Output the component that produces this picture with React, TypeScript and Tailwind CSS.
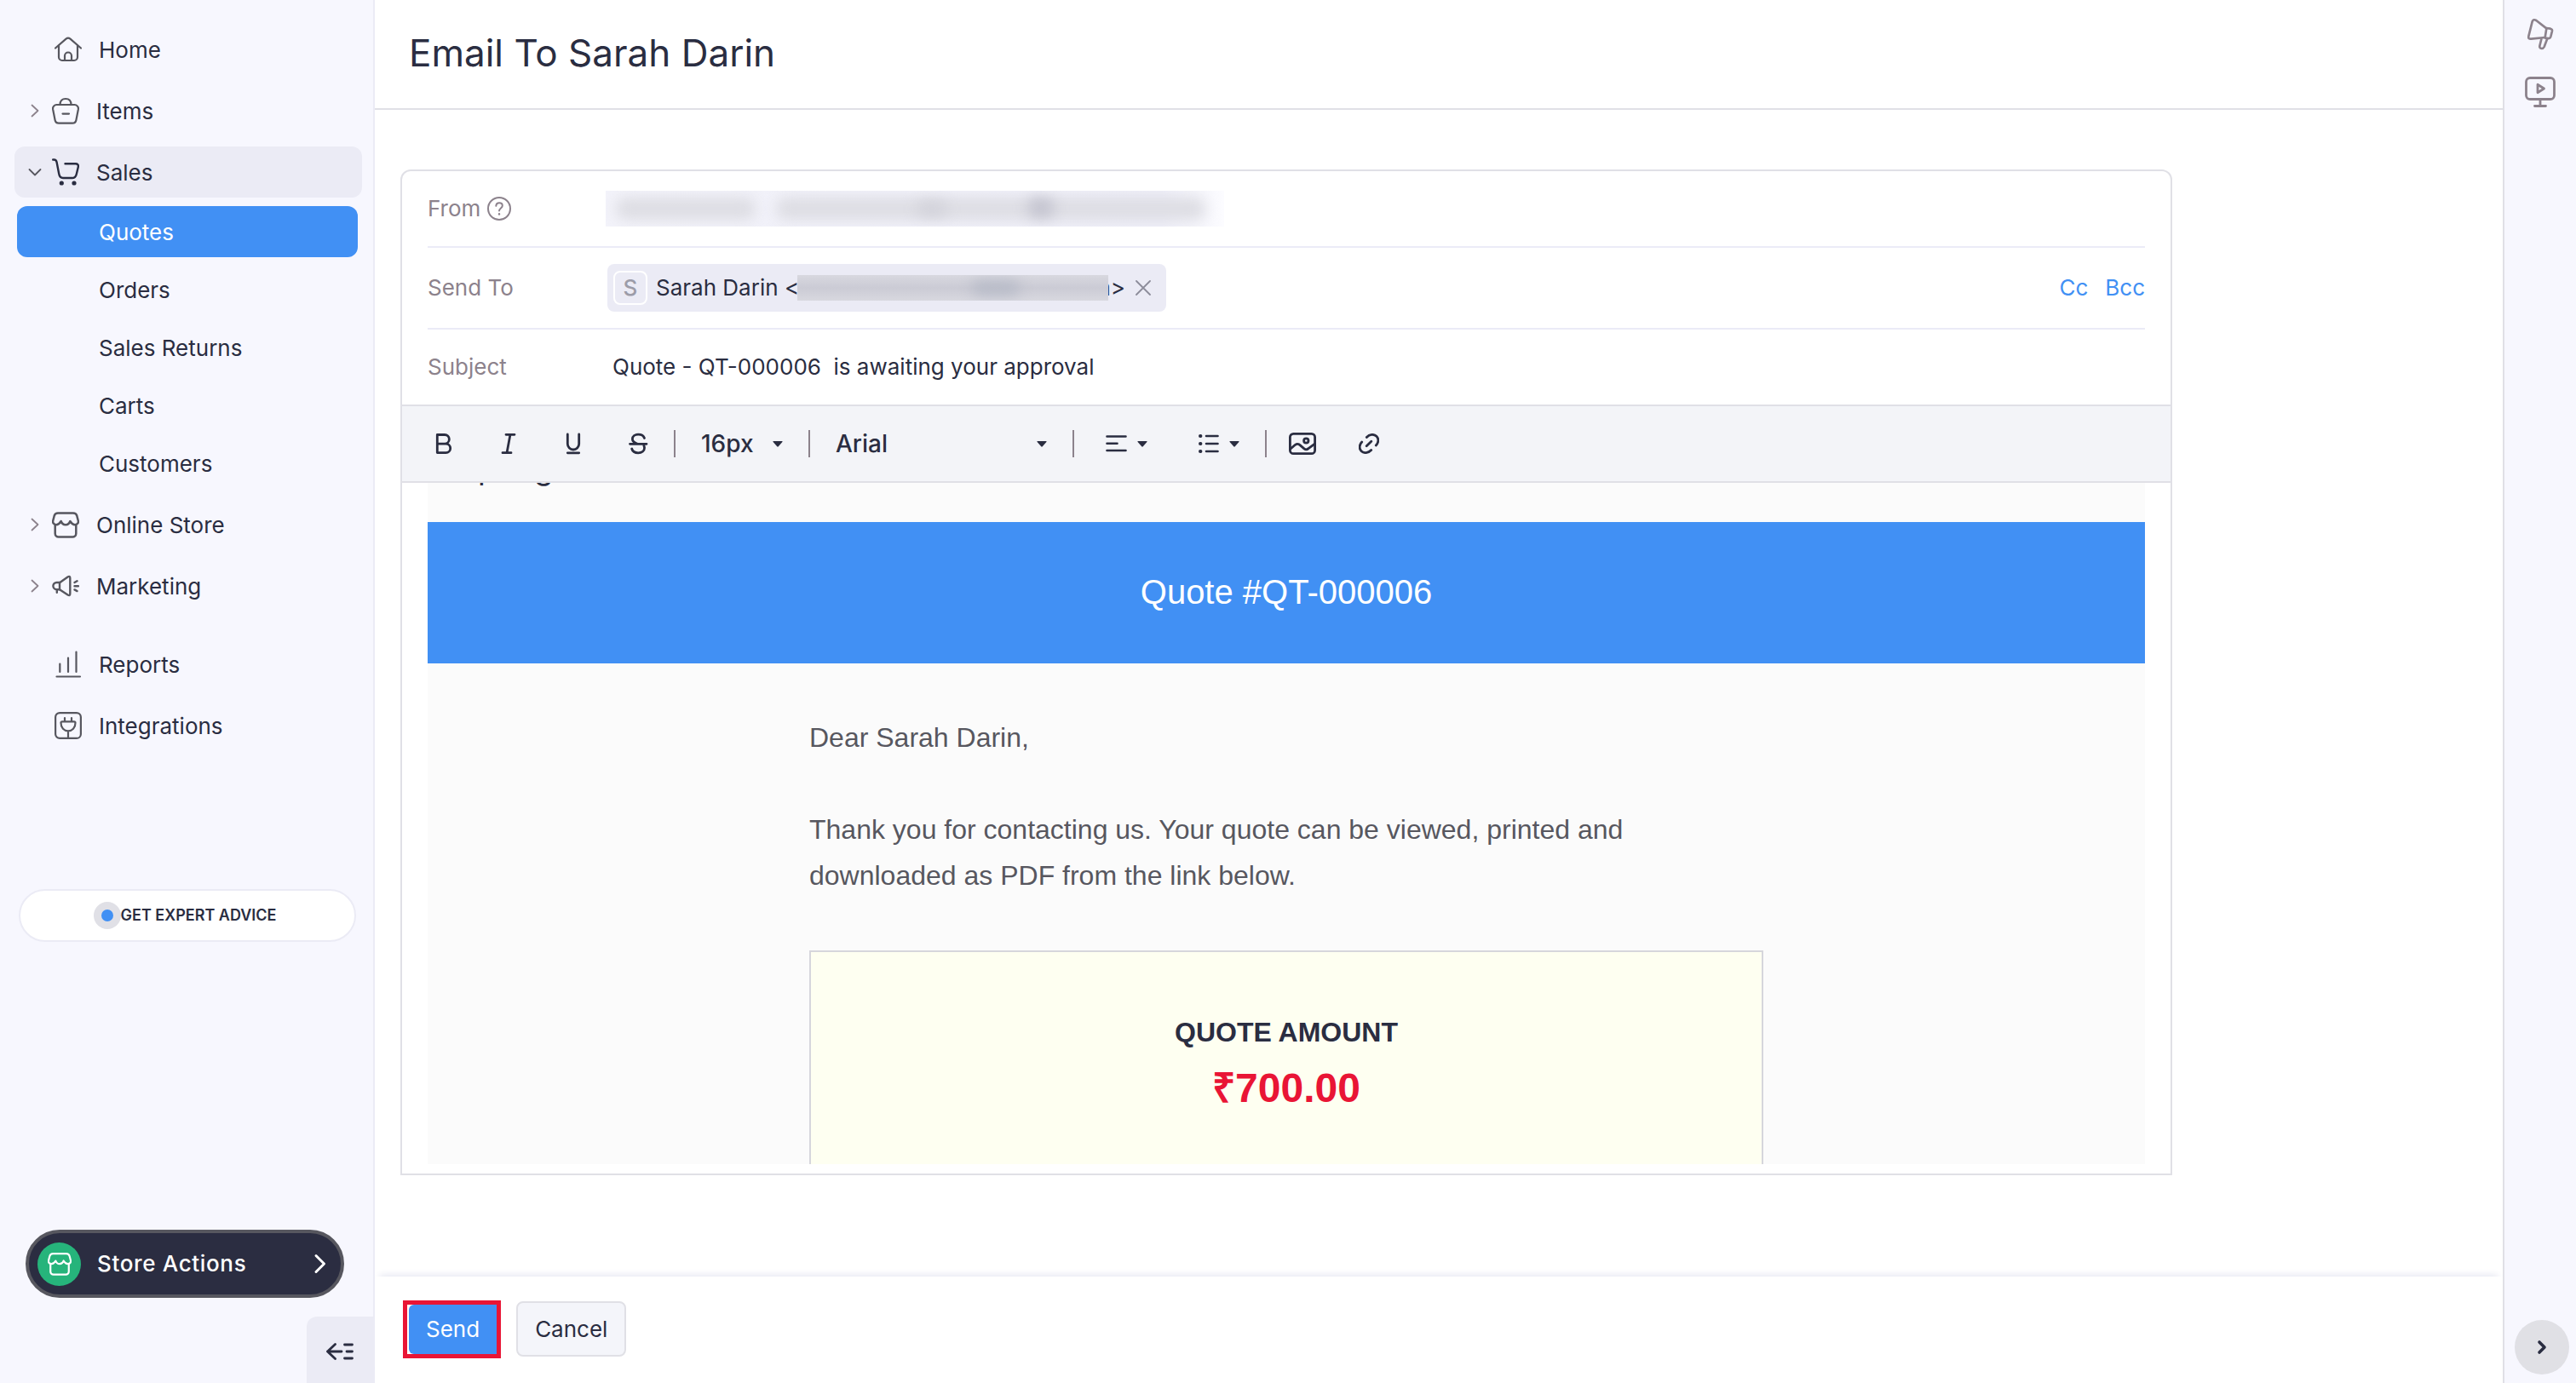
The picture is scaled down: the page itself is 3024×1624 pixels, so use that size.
import React from "react";

type IconProps = { className?: string };

const stroke = {
  fill: "none",
  stroke: "currentColor",
  strokeLinecap: "round" as const,
  strokeLinejoin: "round" as const,
};

const HomeIcon = () => (
  <svg viewBox="0 0 32 32" className="size-8" {...stroke} strokeWidth={2.2}>
    <path d="M1 14.5 13.5 3.6Q16 1.6 18.5 3.6L31 14.5" />
    <path d="M5 11.5V25a4 4 0 0 0 4 4h14a4 4 0 0 0 4-4V11.5" />
    <path d="M12 29v-5.5a4 4 0 0 1 8 0V29" />
  </svg>
);

const BagIcon = () => (
  <svg viewBox="0 0 32 32" className="size-8" {...stroke} strokeWidth={2.2}>
    <path d="M5.5 9h21a4.500 4.500 0 0 1 4.400 5.200L28.400 27a4.500 4.500 0 0 1-4.400 3.700H8A4.500 4.500 0 0 1 3.600 27L1.100 14.200A4.500 4.500 0 0 1 5.500 9Z" />
    <path d="M9.500 9C9.500 4.500 12 2 16 2s6.500 2.500 6.500 7M12.500 19.600h7.500" />
  </svg>
);

const CartIcon = () => (
  <svg viewBox="0 0 32 32" className="size-8" {...stroke} strokeWidth={2.4}>
    <path d="M1.200 1.500h1.300c2 0 2.700 1 3.100 3L8.200 18c.6 3.500 1.800 5 4.800 5h10.500c3 0 4.500-1.300 5.200-4.300l2-8.200c.7-3-.6-4.300-3.100-4.300H15.500" />
    <circle cx="11.300" cy="29" r="1.400" fill="currentColor" />
    <circle cx="26" cy="29" r="1.400" fill="currentColor" />
  </svg>
);

const StoreIcon = ({ className = "size-8" }: IconProps) => (
  <svg viewBox="0 0 32 32" className={className} {...stroke} strokeWidth={2.5}>
    <path d="M7 2.500h18a4.500 4.500 0 0 1 4.300 3.200l1.500 5.800c.6 2.600-1.200 4.700-3.800 4.700-2.300 0-3.700-.9-5.700-4.200-1.100 3.300-3.100 4.200-5.300 4.200s-4.200-.9-5.300-4.200C8.700 15.300 7.300 16.200 5 16.200c-2.600 0-4.400-2.100-3.800-4.700l1.500-5.800A4.500 4.500 0 0 1 7 2.500Z" />
    <path d="M3.700 16v10.500a4 4 0 0 0 4 4h16.600a4 4 0 0 0 4-4V16" />
  </svg>
);

const MegaphoneIcon = () => (
  <svg viewBox="0 0 32 32" className="size-8" {...stroke} strokeWidth={2.4}>
    <path d="M9 12.300 18.500 5.500Q21.300 3.800 21.300 7v18q0 3.200-2.800 1.500L9 20.200" />
    <path d="M9 12H5.500a4.100 4.100 0 0 0 0 8.200H9ZM5.800 20.500v3.300" />
    <path d="M26.500 16.200h4.500M26.500 12l3-1.700M26.500 20.400l3 1.700" />
  </svg>
);

const ReportsIcon = () => (
  <svg viewBox="0 0 32 32" className="size-8" {...stroke} strokeWidth={2.2}>
    <path d="M6.300 15.500V25M16 8.500V25M25.500 1.500V25M2.500 30.500H30" />
  </svg>
);

const PlugIcon = () => (
  <svg viewBox="0 0 32 32" className="size-8" {...stroke} strokeWidth={2.2}>
    <rect x="1.100" y="1.100" width="29.800" height="29.800" rx="5" />
    <path d="M12 7v4M20 7v4M9 11.300h14q1.500 0 1.500 1.500c0 6-3.700 9.600-8.500 9.600s-8.500-3.600-8.500-9.600q0-1.500 1.500-1.500ZM16 22.500V31" />
  </svg>
);

const Chevron = ({ open }: { open?: boolean }) => (
  <svg viewBox="0 0 16 16" className={open ? "size-4 text-[#57575f]" : "size-4 text-[#8c828c]"} {...stroke} strokeWidth={1.8}>
    {open ? <path d="m1.500 5 6.500 6.500L14.500 5" /> : <path d="m4.500 1.500 7 6.500-7 6.500" />}
  </svg>
);

const Caret = ({ className = "" }: IconProps) => (
  <svg viewBox="0 0 12 7" className={"h-[7px] w-3 " + className} fill="currentColor">
    <path d="M1 0h10q1 0 .4.900L6.800 6.300q-.8.700-1.600 0L.6.900Q0 0 1 0Z" />
  </svg>
);

const Divider = () => <span className="h-8 w-[2px] bg-[#8c828c]" />;

function PlainItem({ icon, label }: { icon: React.ReactNode; label: string }) {
  return (
    <a href="#" className="flex h-[60px] items-center gap-5 pl-[47px] text-[#57575f]">
      {icon}
      <span className="pt-[2px] text-[#2a2d41]">{label}</span>
    </a>
  );
}

function GroupItem({ icon, label, open }: { icon: React.ReactNode; label: string; open?: boolean }) {
  return (
    <button
      type="button"
      aria-expanded={!!open}
      className={
        open
          ? "flex h-[60px] w-full items-center rounded-xl bg-[#ebebf5] pl-4 text-[#2a2d41]"
          : "flex h-[60px] w-full items-center rounded-xl pl-4 text-[#57575f]"
      }
    >
      <Chevron open={open} />
      <span className="ml-3">{icon}</span>
      <span className="ml-5 pt-[2px] text-[#2a2d41]">{label}</span>
    </button>
  );
}

function Sidebar() {
  return (
    <aside className="flex w-[440px] shrink-0 flex-col border-r-2 border-[#ebebf5] bg-[#f7f7fe]">
      <nav className="flex flex-col gap-3 pt-7 pr-[13px] pl-[17px]">
        <PlainItem icon={<HomeIcon />} label="Home" />
        <GroupItem icon={<BagIcon />} label="Items" />
        <div>
          <GroupItem icon={<CartIcon />} label="Sales" open />
          <div className="mt-[10px] mr-[5px] ml-[3px] flex flex-col gap-2">
            <a href="#" aria-current="page" className="flex h-[60px] items-center rounded-xl bg-[#4190f4] pt-[2px] pl-24 text-white">
              Quotes
            </a>
            {["Orders", "Sales Returns", "Carts", "Customers"].map((item) => (
              <a key={item} href="#" className="flex h-[60px] items-center pt-[2px] pl-24">
                {item}
              </a>
            ))}
          </div>
        </div>
        <GroupItem icon={<StoreIcon />} label="Online Store" />
        <GroupItem icon={<MegaphoneIcon />} label="Marketing" />
        <div className="mt-5 flex flex-col gap-3">
          <PlainItem icon={<ReportsIcon />} label="Reports" />
          <PlainItem icon={<PlugIcon />} label="Integrations" />
        </div>
      </nav>

      <button
        type="button"
        className="mt-[162px] mr-5 ml-[22px] flex h-[62px] items-center justify-center rounded-full border-2 border-[#ebebf5] bg-white pr-[6px] text-lg font-semibold"
      >
        <span className="flex size-8 items-center justify-center rounded-full bg-[#e0e0e6]">
          <span className="size-[14px] rounded-full bg-[#4190f4]" />
        </span>
        GET EXPERT ADVICE
      </button>

      <div className="mt-auto">
        <button
          type="button"
          className="mr-[34px] ml-[30px] flex h-20 w-[374px] items-center rounded-full border-4 border-[#57575f] bg-[#2b2d41] pr-4 pl-[10px] font-medium text-white"
        >
          <span className="flex size-[51px] items-center justify-center rounded-full bg-[#26b47b]">
            <StoreIcon className="size-7" />
          </span>
          <span className="ml-[19px] tracking-wide">Store Actions</span>
          <svg viewBox="0 0 16 24" className="ml-auto h-6 w-4" {...stroke} strokeWidth={3}>
            <path d="m3 2.500 9.500 9.500L3 21.500" />
          </svg>
        </button>
        <button
          type="button"
          aria-label="Collapse sidebar"
          className="mt-[22px] ml-auto flex h-[78px] w-[78px] items-center justify-center rounded-tl-xl bg-[#ebebf5] pt-1"
        >
          <svg viewBox="0 0 32 24" className="h-6 w-8" {...stroke} strokeWidth={2.800}>
            <path d="M10.500 3.500 1.500 12l9 8.500M1.500 12H18M21.500 4h9M24 12h6.500M21.500 20h9" />
          </svg>
        </button>
      </div>
    </aside>
  );
}

const tool = "flex size-8 items-center justify-center";

function Toolbar() {
  return (
    <div className="flex h-[92px] items-center border-y-2 border-[#e0e0e6] bg-[#f3f4f8] pl-[33px]">
      <div className="flex gap-11">
        <button type="button" aria-label="Bold" className={tool}>
          <svg viewBox="0 0 32 32" className="size-8" {...stroke} strokeWidth={2.800}>
            <path d="M8.300 5.500H17a5 5 0 0 1 0 10.700H8.300ZM8.300 16.200H18.500a5.200 5.200 0 0 1 0 10.400H8.300Z" />
          </svg>
        </button>
        <button type="button" aria-label="Italic" className={tool}>
          <svg viewBox="0 0 32 32" className="size-8" {...stroke} strokeWidth={2.800}>
            <path d="M13 5.300h10M9 26.700h10M18 5.300l-4 21.400" />
          </svg>
        </button>
        <button type="button" aria-label="Underline" className={tool}>
          <svg viewBox="0 0 32 32" className="size-8" {...stroke} strokeWidth={2.800}>
            <path d="M9.300 5v11.300a6.700 6.700 0 0 0 13.400 0V5M9.300 26.800h13.400" />
          </svg>
        </button>
        <button type="button" aria-label="Strikethrough" className={tool}>
          <svg viewBox="0 0 32 32" className="size-8" {...stroke} strokeWidth={2.800}>
            <path d="M23.500 9.500C22.500 6.600 19.800 5.200 16.300 5.200c-4 0-6.900 2-6.900 5.400 0 3 2.400 4.400 5.600 5.400M8.700 22c.9 3.200 3.800 4.800 7.500 4.800 4.200 0 7.300-2.200 7.300-5.800 0-1-.2-1.800-.6-2.500M6.500 16.300h19.500" />
          </svg>
        </button>
      </div>
      <div className="ml-[26px] flex items-center gap-[30px] text-[28px] leading-9 font-medium">
        <Divider />
        <div className="relative flex w-24 items-center">
          <select aria-label="Font size" className="w-full appearance-none bg-transparent">
            <option>16px</option>
          </select>
          <Caret className="pointer-events-none absolute right-0" />
        </div>
        <Divider />
        <div className="relative flex w-[248px] items-center">
          <select aria-label="Font family" className="w-full appearance-none bg-transparent">
            <option>Arial</option>
          </select>
          <Caret className="pointer-events-none absolute right-0" />
        </div>
        <Divider />
      </div>
      <button type="button" aria-label="Align" className="ml-9 flex h-8 items-center gap-3">
        <svg viewBox="0 0 26 24" className="h-6 w-[26px]" {...stroke} strokeWidth={2.600}>
          <path d="M2.500 3.500h22M2.500 11.800h12M2.500 20h22" />
        </svg>
        <Caret />
      </button>
      <button type="button" aria-label="List" className="ml-[60px] flex h-8 items-center gap-3">
        <svg viewBox="0 0 24 24" className="size-6" {...stroke} strokeWidth={2.600}>
          <path d="M9 3h13.500M9 12h13.500M9 21h13.500" />
          <path d="M2 3h.4M2 12h.4M2 21h.4" strokeWidth={4} />
        </svg>
        <Caret />
      </button>
      <span className="ml-[30px] flex">
        <Divider />
      </span>
      <button type="button" aria-label="Insert image" className="ml-[26px]">
        <svg viewBox="0 0 32 32" className="size-8" {...stroke} strokeWidth={2.800}>
          <rect x="1.400" y="4.300" width="29.200" height="23.400" rx="4" />
          <circle cx="20.300" cy="12.500" r="2.700" />
          <path d="m2 22 5.500-4.700q2.800-2 5.500.3l5 4.300q2.500 2 5-.3l7.500-5.400" />
        </svg>
      </button>
      <button type="button" aria-label="Insert link" className="ml-[50px]">
        <svg viewBox="0 0 24 24" className="size-6" {...stroke} strokeWidth={2.800}>
          <path d="M9.300 4.500C12.800.7 17.800.4 20.900 3.300c3 2.900 2.500 7.500-.6 10.700M14.700 19.500c-3.500 3.800-8.500 4.100-11.600 1.200-3-2.900-2.500-7.500.6-10.700M9.200 14.800l5.600-5.600" />
        </svg>
      </button>
    </div>
  );
}

function EmailBody() {
  return (
    <div className="mx-[30px] mb-[11px] h-[800px] overflow-hidden bg-[#fbfbfb] font-['Liberation_Sans',Arial,sans-serif]">
      <p className="-mt-[39px] h-[85px] pl-9 font-['Inter',sans-serif] text-[36px] leading-[44px]">Spring</p>
      <h2 className="flex h-[166px] items-center justify-center bg-[#4190f4] pb-[2px] text-[40px] text-white">Quote #QT-000006</h2>
      <div className="mx-auto mt-[60px] max-w-[1120px]">
        <div className="text-[32px] leading-[54px] text-[#57575f]">
          <p>Dear Sarah Darin,</p>
          <p className="mt-[54px]">
            Thank you for contacting us. Your quote can be viewed, printed and
            <br />
            downloaded as PDF from the link below.
          </p>
        </div>
        <div className="mt-[61px] h-[400px] border-2 border-[#d6d6dc] bg-[#fefff1] pt-[67px] text-center font-bold">
          <p className="text-[32px] leading-[54px]">QUOTE AMOUNT</p>
          <p className="text-[48px] leading-[78px] text-[#e91535]">₹700.00</p>
        </div>
      </div>
    </div>
  );
}

function Composer() {
  return (
    <form className="max-w-[2080px] rounded-t-xl border-2 border-[#e0e0e6] bg-white">
      <div className="mx-[30px]">
        <div className="flex h-[90px] items-center border-b-2 border-[#ebebf7]">
          <div className="flex w-[209px] items-center gap-2 text-[#8c828c]">
            From
            <svg viewBox="0 0 28 28" className="size-7" {...stroke} strokeWidth={2}>
              <circle cx="14" cy="14" r="13" />
              <path d="M10.300 10.800c.2-2.200 1.700-3.500 3.800-3.500 2.200 0 3.700 1.300 3.700 3.200 0 2.900-3.800 3-3.800 6" />
              <path d="M14 20.200v.3" strokeWidth={2.400} />
            </svg>
          </div>
          <div className="relative h-[42px] w-[726px] overflow-hidden bg-linear-to-r from-[#f3f3fa] via-[#eeeef8] via-90% to-[#fcfcff]" aria-label="Sender hidden">
            <span className="absolute top-2 left-3 h-[26px] w-[164px] rounded-xl bg-[#dddde3] blur-[8px]" />
            <span className="absolute top-2 left-[200px] h-[26px] w-[504px] rounded-xl bg-[#dddde3] blur-[8px]" />
            <span className="absolute top-3 left-[365px] h-[18px] w-9 rounded-xl bg-[#d2d2da] blur-[8px]" />
            <span className="absolute top-2 left-[495px] h-6 w-8 rounded-xl bg-[#c4c4d0] blur-[8px]" />
          </div>
        </div>
        <div className="flex h-24 items-center border-b-2 border-[#ebebf7]">
          <span className="w-[211px] text-[#8c828c]">Send To</span>
          <div className="flex h-14 items-center rounded-lg bg-[#ebebf5] pr-[18px] pl-[7px]">
            <span className="flex size-10 items-center justify-center rounded-lg border-2 border-white font-medium text-[#9c9ca8]">S</span>
            <span className="ml-[10px]">Sarah Darin &lt;</span>
            <span className="relative z-10 -ml-[2px] h-[30px] w-[365px] overflow-hidden bg-linear-to-b from-[#d8d8df] via-[#cbcbd5] to-[#d8d8df]">
              <span className="absolute top-[7px] left-[205px] h-4 w-14 rounded-full bg-[#b5b9c6] blur-[8px]" />
            </span>
            <span className="-ml-5">m&gt;</span>
            <button type="button" aria-label="Remove recipient" className="ml-3 text-[#8c8c9a]">
              <svg viewBox="0 0 18 18" className="size-[18px]" {...stroke} strokeWidth={1.800}>
                <path d="m1 1 16 16M17 1 1 17" />
              </svg>
            </button>
          </div>
          <div className="ml-auto flex gap-5 text-[#4190f4]">
            <button type="button">Cc</button>
            <button type="button">Bcc</button>
          </div>
        </div>
        <div className="flex h-[88px] items-center">
          <label htmlFor="subject" className="w-[217px] text-[#8c828c]">
            Subject
          </label>
          <input id="subject" className="flex-1 bg-transparent outline-none" defaultValue={"Quote - QT-000006  is awaiting your approval"} />
        </div>
      </div>
      <Toolbar />
      <EmailBody />
    </form>
  );
}

function RightRail() {
  return (
    <aside className="flex w-[86px] shrink-0 flex-col items-center border-l-2 border-[#e0e0e6] bg-[#f7f7fe] pt-[21px] pb-[10px] text-[#8c828c]">
      <button type="button" aria-label="Announcements">
        <svg viewBox="312 63 108 114" className="h-[38px] w-9" {...stroke} strokeWidth={8}>
          <path d="M388 100 352 72q-10-6-14 4l-13 52q-2 10 9 9l49-5" />
          <path d="m388 99 14 2q7 2 6 8l-5 20q-2 7-9 6l-10-1M388 100l-5 32" />
          <path d="m370 138-6 24q-1 8 7 9 6 0 9-6l11-29" />
        </svg>
      </button>
      <button type="button" aria-label="Video guide" className="mt-[31px]">
        <svg viewBox="0 0 36 36" className="size-9" {...stroke} strokeWidth={2.800}>
          <rect x="1.500" y="1.500" width="33" height="25" rx="4.500" />
          <path d="M15 9.200v9.600l7.500-4.800ZM18 26.500V34M11.500 34.500h13" />
        </svg>
      </button>
      <button type="button" aria-label="Expand panel" className="mt-auto mr-2 ml-auto flex size-16 items-center justify-center rounded-full bg-[#e0e0e5] text-[#2a2d41]">
        <svg viewBox="0 0 12 18" className="h-[18px] w-3" {...stroke} strokeWidth={3.600}>
          <path d="m3 3 6 6-6 6" />
        </svg>
      </button>
    </aside>
  );
}

export default function App() {
  return (
    <div className="flex min-h-screen bg-white font-['Inter',sans-serif] text-[26px] leading-8 text-[#2a2d41]">
      <Sidebar />
      <main className="flex min-w-0 flex-1 flex-col">
        <header className="flex h-[129px] items-center border-b-2 border-[#e0e0e6] px-10 pb-1">
          <h1 className="text-[44px] leading-[52px]">Email To Sarah Darin</h1>
        </header>
        <div className="flex-1 px-[30px] pt-[70px]">
          <Composer />
        </div>
        <footer className="flex h-[125px] items-center gap-[18px] bg-white px-[33px] pb-[2px] shadow-[0_-8px_8px_-6px_#e6e7f2]">
          <div className="border-[5px] border-[#e91535] pl-[2px]">
            <button type="button" className="flex h-[58px] items-center rounded-l-md bg-[#4190f4] px-5 text-white">
              Send
            </button>
          </div>
          <button type="button" className="flex h-[65px] items-center rounded-lg border-2 border-[#e0e0e6] bg-[#f4f5fa] px-5">
            Cancel
          </button>
        </footer>
      </main>
      <RightRail />
    </div>
  );
}
